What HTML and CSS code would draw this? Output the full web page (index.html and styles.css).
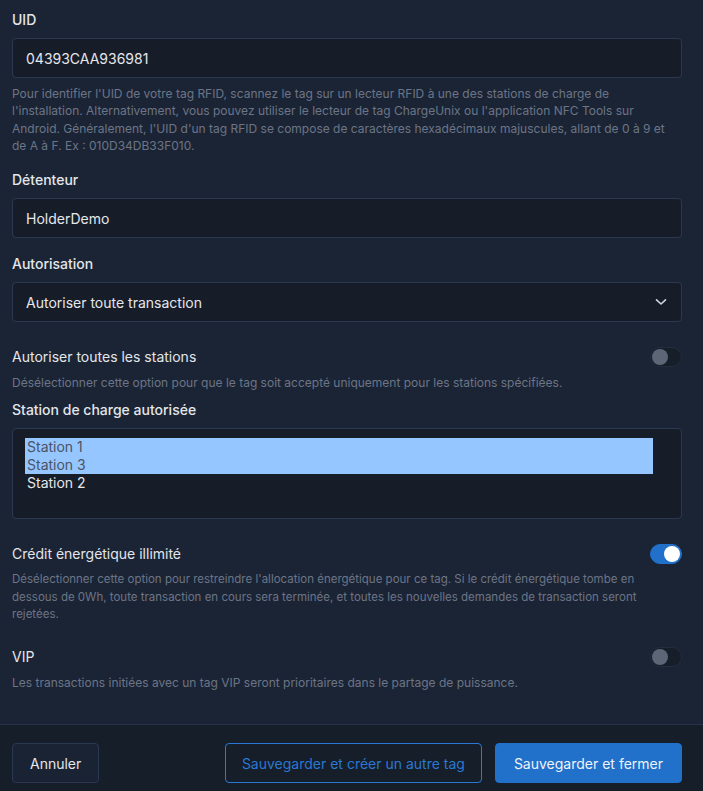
FILE: index.html
```html
<!DOCTYPE html>
<html lang="fr">
<head>
<meta charset="utf-8">
<title>Tag RFID</title>
<link rel="stylesheet" href="styles.css">
</head>
<body>
<div class="modal">
  <div class="body">
    <div class="field first">
      <div class="label">UID</div>
      <div class="input">04393CAA936981</div>
      <p class="help">Pour identifier l'UID de votre tag RFID, scannez le tag sur un lecteur RFID à une des stations de charge de l'installation. Alternativement, vous pouvez utiliser le lecteur de tag ChargeUnix ou l'application NFC Tools sur Android. Généralement, l'UID d'un tag RFID se compose de caractères hexadécimaux majuscules, allant de 0 à 9 et de A à F. Ex : 010D34DB33F010.</p>
    </div>
    <div class="field">
      <div class="label">Détenteur</div>
      <div class="input">HolderDemo</div>
    </div>
    <div class="field">
      <div class="label">Autorisation</div>
      <div class="input select">
        <span>Autoriser toute transaction</span>
        <svg class="chev" width="12" height="8" viewBox="0 0 12 8"><path d="M1.5 1.8 L6 6 L10.5 1.8" fill="none" stroke="#cfd4dc" stroke-width="1.6" stroke-linecap="round" stroke-linejoin="round"/></svg>
      </div>
    </div>
    <div class="field toggle-field">
      <div class="row">
        <div class="label">Autoriser toutes les stations</div>
        <span class="toggle"><span class="knob"></span></span>
      </div>
      <p class="help">Désélectionner cette option pour que le tag soit accepté uniquement pour les stations spécifiées.</p>
    </div>
    <div class="field tight">
      <div class="label">Station de charge autorisée</div>
      <div class="listbox">
        <div class="opt sel">Station 1</div>
        <div class="opt sel">Station 3</div>
        <div class="opt">Station 2</div>
      </div>
    </div>
    <div class="field toggle-field">
      <div class="row">
        <div class="label">Crédit énergétique illimité</div>
        <span class="toggle on"><span class="knob"></span></span>
      </div>
      <p class="help small">Désélectionner cette option pour restreindre l'allocation énergétique pour ce tag. Si le crédit énergétique tombe en dessous de 0Wh, toute transaction en cours sera terminée, et toutes les nouvelles demandes de transaction seront rejetées.</p>
    </div>
    <div class="field toggle-field vip">
      <div class="row">
        <div class="label">VIP</div>
        <span class="toggle"><span class="knob"></span></span>
      </div>
      <p class="help">Les transactions initiées avec un tag VIP seront prioritaires dans le partage de puissance.</p>
    </div>
  </div>
  <div class="footer">
    <button class="btn">Annuler</button>
    <div class="actions">
      <button class="btn outline">Sauvegarder et créer un autre tag</button>
      <button class="btn primary">Sauvegarder et fermer</button>
    </div>
  </div>
</div>
</body>
</html>
```
FILE: styles.css
```css
* { box-sizing: border-box; }
html, body { margin: 0; padding: 0; }
body {
  background: #1b2434;
  font-family: Inter, "Noto Sans", sans-serif;
  color: #e3e6eb;
  width: 703px;
  height: 791px;
  overflow: hidden;
}
.modal { display: flex; flex-direction: column; }
.body { padding: 10px 21px 0 12px; height: 724px; }
.field { margin-top: 16px; }
.field.first { margin-top: 0; }
.field.toggle-field { margin-top: 25px; }
.field.tight { margin-top: 9px; }
.field.vip { margin-top: 24px; }
.label {
  font-size: 14px;
  line-height: 20px;
  font-weight: 500;
  color: #e3e6eb;
  margin-bottom: 8px;
}
.row { display: flex; justify-content: space-between; align-items: center; height: 20px; }
.row .label { margin-bottom: 0; font-weight: 400; }
.input {
  height: 40px;
  background: #161d29;
  border: 1px solid #2a3850;
  border-radius: 4px;
  padding: 0 13px;
  display: flex;
  align-items: center;
  font-size: 14px;
  color: #e5e7eb;
}
.select { justify-content: space-between; padding-right: 14px; }
.chev { display: block; }
.help {
  margin: 7px 0 0;
  font-size: 12px;
  line-height: 17.25px;
  color: #6c7587;
}
.help.small { font-size: 11.5px; }
.toggle {
  width: 32px;
  height: 20px;
  border-radius: 10px;
  background: #161e2a;
  border: 1px solid #222d3e;
  position: relative;
  display: inline-block;
}
.toggle .knob {
  position: absolute;
  top: 1px;
  left: 1px;
  width: 16px;
  height: 16px;
  border-radius: 50%;
  background: #5d6677;
}
.toggle.on { background: #2170c9; border-color: #2170c9; }
.toggle.on .knob { left: auto; right: 1px; background: #ffffff; }
.listbox {
  height: 91px;
  background: #161d29;
  border: 1px solid #2a3850;
  border-radius: 4px;
  padding: 9px 28px 0 12px;
}
.opt {
  font-size: 14px;
  line-height: 18px;
  padding-left: 2px;
  color: #e5e7eb;
}
.opt.sel { background: #96c6ff; color: #4a5465; }
.footer {
  border-top: 1px solid #26334a;
  background: #161e2a;
  height: 67px;
  padding: 18px 21px 0 12px;
  display: flex;
  justify-content: space-between;
  align-items: flex-start;
}
.actions { display: flex; gap: 13px; }
.btn {
  height: 40px;
  font-family: Inter, "Noto Sans", sans-serif;
  font-size: 14px;
  font-weight: 400;
  padding: 0 17px;
  border-radius: 4px;
  border: 1px solid #2a3850;
  background: #1a2333;
  color: #e3e6eb;
  cursor: pointer;
}
.btn.outline { background: transparent; border-color: #2a78d3; color: #2a78d3; padding: 0 16px; }
.btn.primary { background: #2170c9; border-color: #2170c9; color: #eef3fa; padding: 0 18px; }
```
